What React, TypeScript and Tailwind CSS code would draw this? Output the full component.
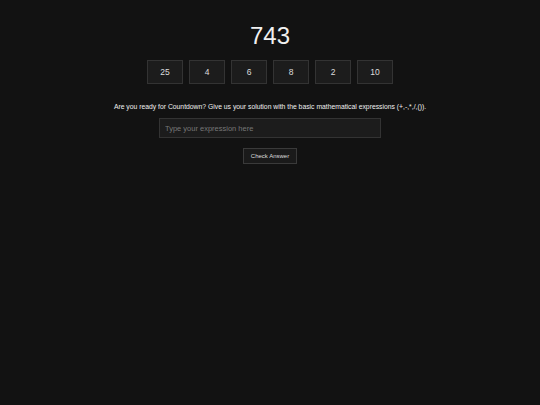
const numbers = [25, 4, 6, 8, 2, 10];

export default function App() {
  return (
    <div
      className="min-h-[405px] w-full bg-[#121212] text-[#e6e6e6] flex flex-col items-center pt-[22px]"
      style={{ fontFamily: '"Liberation Sans", Arial, sans-serif' }}
    >
      <h1 className="text-[24px] leading-[28px] text-[#f0f0f0]">743</h1>
      <div className="mt-[10px] flex gap-[6px]">
        {numbers.map((n, i) => (
          <div
            key={i}
            className="w-[36px] h-[24px] flex items-center justify-center bg-[#1c1c1c] border border-[#333333] text-[8.5px] text-[#dddddd]"
          >
            {n}
          </div>
        ))}
      </div>
      <p className="mt-[19px] text-[6.8px] leading-[8px] text-[#f0f0f0]">
        Are you ready for Countdown? Give us your solution with the basic mathematical expressions (+,-,*,/,()).
      </p>
      <input
        type="text"
        placeholder="Type your expression here"
        className="mt-[7px] w-[222px] h-[20px] px-[5px] bg-[#1c1c1c] border border-[#333333] text-[7.5px] text-[#ddd] placeholder:text-[#777777] outline-none"
      />
      <button className="mt-[10px] w-[54px] h-[16px] bg-[#1a1a1a] border border-[#3a3a3a] text-[6px] text-[#dddddd]">
        Check Answer
      </button>
    </div>
  );
}
